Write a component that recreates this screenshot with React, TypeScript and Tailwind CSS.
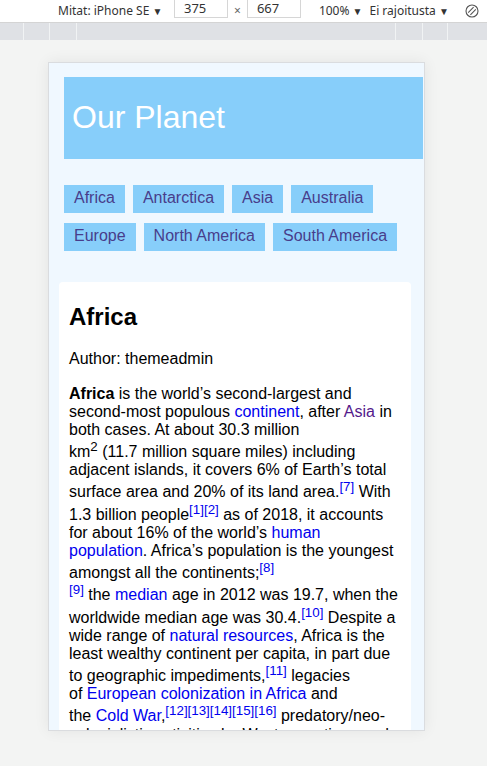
const CONTINENTS = [
  "Africa",
  "Antarctica",
  "Asia",
  "Australia",
  "Europe",
  "North America",
  "South America",
];

function Ref({ n }: { n: string }) {
  return (
    <sup className="static align-super text-[13.33px] leading-[normal] text-[#0000ee]">
      [{n}]
    </sup>
  );
}

function L({ children, visited }: { children: React.ReactNode; visited?: boolean }) {
  return (
    <a className={visited ? "text-[#551a8b]" : "text-[#0000ee]"}>{children}</a>
  );
}

function DevToolbar() {
  return (
    <div className="font-['Noto_Sans',sans-serif] text-[12px] text-[#333]">
      <div className="flex h-[23px] items-center border-b border-[#d4d4d4] bg-white">
        <span className="ml-[58px] w-[116px]">
          Mitat: iPhone SE <span className="text-[10px]">▼</span>
        </span>
        <div className="flex h-[18px] w-[54px] items-center self-start border-x border-b border-[#d6d6d6] pl-[9px] text-[13px]">
          375
        </div>
        <span className="mx-[6px] text-[12px] text-[#666]">×</span>
        <div className="flex h-[18px] w-[54px] items-center self-start border-x border-b border-[#d6d6d6] pl-[9px] text-[13px]">
          667
        </div>
        <span className="ml-[18px]">
          100% <span className="text-[10px]">▼</span>
        </span>
        <span className="ml-[7px]">
          Ei rajoitusta <span className="text-[10px]">▼</span>
        </span>
        <svg className="ml-[16px]" width="14" height="14" viewBox="0 0 14 14" fill="none" stroke="#555" strokeWidth="1.1">
          <circle cx="7" cy="7" r="6" />
          <path d="M3.2 8.6 L8.6 3.2 M5.4 10.8 L10.8 5.4" />
        </svg>
      </div>
      <div className="flex h-[17px] bg-[#dfe1e5]">
        <div className="w-[24px] border-r border-[#f1f3f4]" />
        <div className="w-[26px] border-r border-[#f1f3f4]" />
        <div className="w-[27px] border-r border-[#f1f3f4]" />
        <div className="w-[319px] border-r border-[#f1f3f4]" />
        <div className="w-[27px] border-r border-[#f1f3f4]" />
        <div className="w-[25px] border-r border-[#f1f3f4]" />
        <div className="flex-1" />
      </div>
    </div>
  );
}

export default function App() {
  return (
    <div className="h-[766px] w-[487px] overflow-hidden bg-[#f3f4f3]">
      <DevToolbar />
      <div className="ml-[48px] mt-[22px] h-[669px] w-[377px] overflow-hidden border border-[#dadcdf] bg-[#f0f8ff] font-['Liberation_Sans',Arial,sans-serif] leading-[normal] shadow-[0_0_14px_rgba(0,0,0,0.07)]">
        <div className="pl-[15px] pt-[14px]">
          <header className="flex h-[82px] w-[359px] items-center bg-[#87cefa] pb-[2px] pl-2 text-[32px] text-white">
            Our Planet
          </header>
          <nav className="mt-[26px] flex w-[345px] flex-wrap gap-x-2 gap-y-[10px]">
            {CONTINENTS.map((c) => (
              <a
                key={c}
                className="flex h-[28px] items-center bg-[#87cefa] px-[10px] pb-[2px] text-[16px] text-[#483d8b]"
              >
                {c}
              </a>
            ))}
          </nav>
        </div>
        <article className="ml-[10px] mt-[31px] w-[352px] rounded-[4px] bg-white px-[10px] pt-[21px] text-[16px] text-black">
          <h1 className="text-[24px] font-bold">Africa</h1>
          <p className="mt-[19px]">Author: themeadmin</p>
          <p className="mt-[17px]">
            <b>Africa</b> is the world’s second-largest and
            <br />
            second-most populous <L>continent</L>, after <L visited>Asia</L> in
            <br />
            both cases. At about 30.3 million
            <br />
            km<sup className="static align-super text-[13.33px] leading-[normal]">2</sup> (11.7 million square miles) including
            <br />
            adjacent islands, it covers 6% of Earth’s total
            <br />
            surface area and 20% of its land area.<Ref n="7" /> With
            <br />
            1.3 billion people<Ref n="1" />
            <Ref n="2" /> as of 2018, it accounts
            <br />
            for about 16% of the world’s <L>human</L>
            <br />
            <L>population</L>. Africa’s population is the youngest
            <br />
            amongst all the continents;<Ref n="8" />
            <br />
            <Ref n="9" /> the <L>median</L> age in 2012 was 19.7, when the
            <br />
            worldwide median age was 30.4.<Ref n="10" /> Despite a
            <br />
            wide range of <L>natural resources</L>, Africa is the
            <br />
            least wealthy continent per capita, in part due
            <br />
            to geographic impediments,<Ref n="11" /> legacies
            <br />
            of <L>European colonization in Africa</L> and
            <br />
            the <L>Cold War</L>,<Ref n="12" />
            <Ref n="13" />
            <Ref n="14" />
            <Ref n="15" />
            <Ref n="16" /> predatory/neo-
            <br />
            colonialistic activities by Western nations and
            <br />
            China, and corruption.
          </p>
        </article>
      </div>
    </div>
  );
}
